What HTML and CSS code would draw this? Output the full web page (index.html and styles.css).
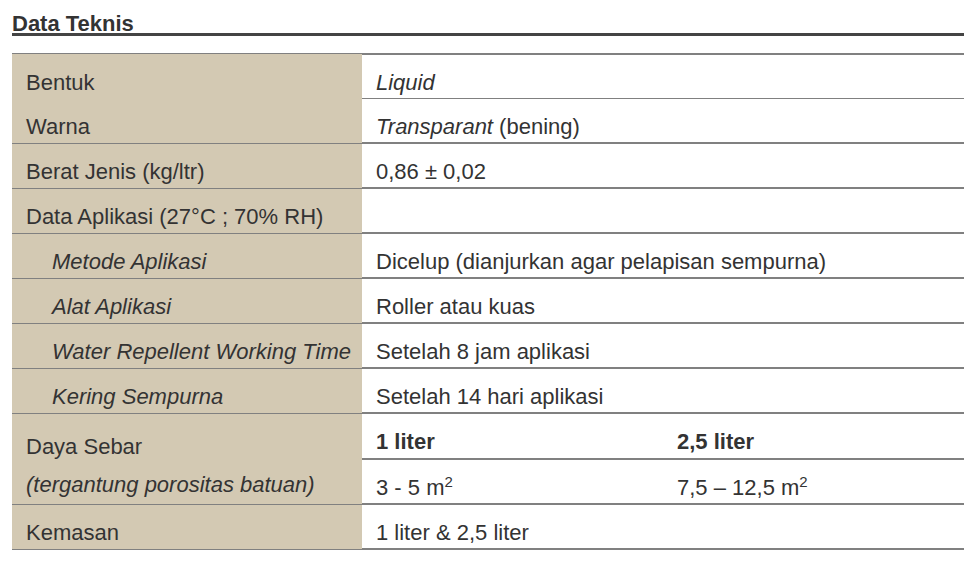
FILE: index.html
```html
<!DOCTYPE html>
<html lang="id">
<head>
<meta charset="utf-8">
<title>Data Teknis</title>
<link rel="stylesheet" href="styles.css">
</head>
<body>
<div class="page">
  <h2 class="title">Data Teknis</h2>
  <table class="spec">
    <colgroup>
      <col class="c-label">
      <col class="c-val">
      <col class="c-val">
    </colgroup>
    <tbody>
      <tr class="first">
        <th class="lbl no-line">Bentuk</th>
        <td class="val thin" colspan="2"><i>Liquid</i></td>
      </tr>
      <tr>
        <th class="lbl">Warna</th>
        <td class="val" colspan="2"><i>Transparant</i> (bening)</td>
      </tr>
      <tr>
        <th class="lbl">Berat Jenis (kg/ltr)</th>
        <td class="val" colspan="2">0,86 ± 0,02</td>
      </tr>
      <tr>
        <th class="lbl">Data Aplikasi (27°C ; 70% RH)</th>
        <td class="val" colspan="2"></td>
      </tr>
      <tr>
        <th class="lbl sub">Metode Aplikasi</th>
        <td class="val" colspan="2">Dicelup (dianjurkan agar pelapisan sempurna)</td>
      </tr>
      <tr>
        <th class="lbl sub">Alat Aplikasi</th>
        <td class="val" colspan="2">Roller atau kuas</td>
      </tr>
      <tr>
        <th class="lbl sub">Water Repellent Working Time</th>
        <td class="val" colspan="2">Setelah 8 jam aplikasi</td>
      </tr>
      <tr>
        <th class="lbl sub">Kering Sempurna</th>
        <td class="val" colspan="2">Setelah 14 hari aplikasi</td>
      </tr>
      <tr>
        <th class="lbl double" rowspan="2">
          <span class="ln">Daya Sebar</span>
          <span class="ln"><i>(tergantung porositas batuan)</i></span>
        </th>
        <td class="val"><b>1 liter</b></td>
        <td class="val"><b>2,5 liter</b></td>
      </tr>
      <tr>
        <td class="val">3 - 5 m<sup>2</sup></td>
        <td class="val">7,5 – 12,5 m<sup>2</sup></td>
      </tr>
      <tr>
        <th class="lbl">Kemasan</th>
        <td class="val" colspan="2">1 liter &amp; 2,5 liter</td>
      </tr>
    </tbody>
  </table>
</div>
</body>
</html>
```

FILE: styles.css
```css
html, body {
  margin: 0;
  padding: 0;
  background: #ffffff;
}

body {
  font-family: "Liberation Sans", Arial, sans-serif;
  color: #333333;
}

.page {
  width: 952px;
  padding-left: 12px;
}

.title {
  margin: 15px 0 0 0;
  font-size: 22px;
  font-weight: bold;
  line-height: 18px;
  height: 18px;
  border-bottom: 3px solid #444444;
  color: #333333;
}

.spec {
  margin-top: 17px;
  width: 952px;
  border-collapse: separate;
  border-spacing: 0;
  table-layout: fixed;
  font-size: 22px;
}

.c-label { width: 350px; }
.c-val { width: 301px; }

.spec th,
.spec td {
  text-align: left;
  font-weight: normal;
  line-height: 25px;
  height: 25px;
  padding: 15px 0 3px 14px;
  vertical-align: top;
  white-space: nowrap;
}

.lbl {
  background: #d3c9b3;
  border-bottom: 1px solid #808080;
}

.lbl.no-line {
  border-bottom-color: #d3c9b3;
}

.lbl.sub {
  padding-left: 40px;
  font-style: italic;
}

.val {
  border-bottom: 2px solid #808080;
}

.val.thin {
  border-bottom-width: 1px;
}

.first th {
  border-top: 1px solid #808080;
  padding-top: 16px;
}

.first td {
  border-top: 2px solid #808080;
}

.spec th.double {
  padding-top: 14px;
  padding-bottom: 0;
  line-height: 38px;
}

.double .ln {
  display: block;
}

.val b {
  font-weight: bold;
}

.val sup {
  font-size: 15px;
  line-height: 0;
  vertical-align: 8px;
}
```
